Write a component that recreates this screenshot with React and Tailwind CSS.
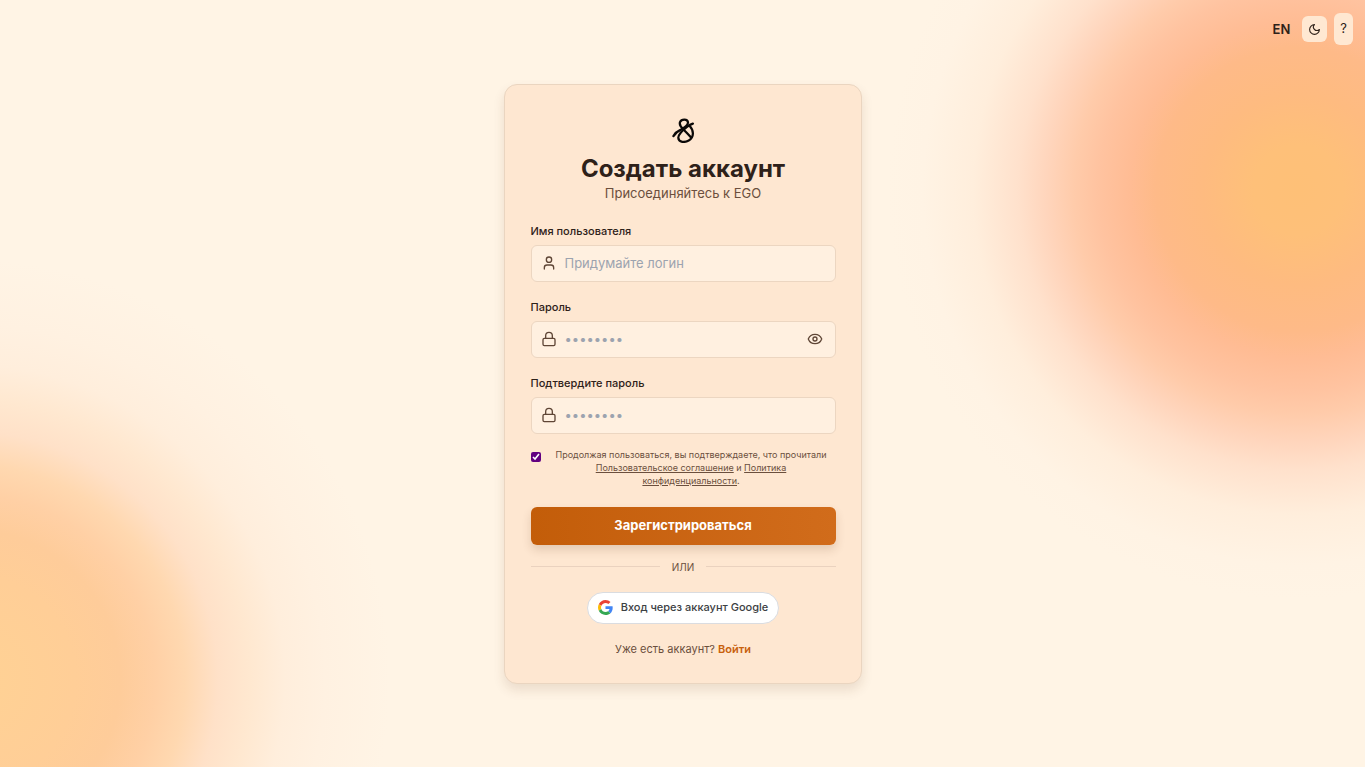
import { useState } from "react";
import { Eye, Lock, User } from "lucide-react";

function Logo() {
  return (
    <svg
      className="h-[25px] w-[23px]"
      viewBox="36 24 66 72"
      fill="none"
      stroke="#0b0908"
      strokeWidth="6.5"
      strokeLinecap="round"
      strokeLinejoin="round"
      aria-hidden="true"
    >
      <path d="M40 76C45 68 52 62 59 59C70 53 82 45 82 37C81 26 63 26 59 36C56 45 62 51 69 57C77 65 83 72 90 79" />
      <path d="M96 40C90 42 86 44 80 49C67 59 54 71 54 81C55 95 73 95 84 89C100 79 99 60 87 47" />
    </svg>
  );
}

function MoonIcon() {
  return (
    <svg
      className="size-[13px]"
      viewBox="0 0 24 24"
      fill="none"
      stroke="currentColor"
      strokeWidth="2"
      strokeLinecap="round"
      strokeLinejoin="round"
      aria-hidden="true"
    >
      <path d="M12 3a6 6 0 0 0 9 9 9 9 0 1 1-9-9Z" />
    </svg>
  );
}

function GoogleLogo() {
  return (
    <svg className="size-[15px]" viewBox="0 0 48 48" aria-hidden="true">
      <path fill="#EA4335" d="M24 9.5c3.54 0 6.71 1.22 9.21 3.6l6.85-6.85C35.9 2.38 30.47 0 24 0 14.62 0 6.51 5.38 2.56 13.22l7.98 6.19C12.43 13.72 17.74 9.5 24 9.5z" />
      <path fill="#4285F4" d="M46.98 24.55c0-1.57-.15-3.09-.38-4.55H24v9.02h12.94c-.58 2.96-2.26 5.48-4.78 7.18l7.73 6c4.51-4.18 7.09-10.36 7.09-17.65z" />
      <path fill="#FBBC05" d="M10.53 28.59c-.48-1.45-.76-2.99-.76-4.59s.27-3.14.76-4.59l-7.98-6.19C.92 16.46 0 20.12 0 24c0 3.88.92 7.54 2.56 10.78l7.97-6.19z" />
      <path fill="#34A853" d="M24 48c6.48 0 11.93-2.13 15.89-5.81l-7.73-6c-2.15 1.45-4.92 2.3-8.16 2.3-6.26 0-11.57-4.22-13.47-9.91l-7.98 6.19C6.51 42.62 14.62 48 24 48z" />
    </svg>
  );
}

function Field({ id, label, icon: Icon, type = "text", placeholder, children }) {
  return (
    <div className="flex flex-col gap-1.5">
      <label htmlFor={id} className="text-[11px] leading-4 font-medium">
        {label}
      </label>
      <div className="flex h-[37px] items-center gap-2 rounded-md border border-[#ecd6c1] bg-[#fff0e0] pr-3 pl-[9px]">
        <Icon className="size-4 shrink-0 text-[#5f4636]" strokeWidth={2} />
        <input
          id={id}
          type={type}
          placeholder={placeholder}
          className="h-full min-w-0 flex-1 bg-transparent text-[13px] outline-none placeholder:text-[#9ca3af]"
        />
        {children}
      </div>
    </div>
  );
}

export default function App() {
  const [visible, setVisible] = useState(false);

  return (
    <div className="relative flex min-h-screen flex-col items-center justify-center overflow-hidden bg-[#fff4e5] bg-[radial-gradient(circle_at_calc(100%-67px)_190px,#fec077_0px,#fec079_45px,#febb80_95px,#feba88_142px,#ffbc94_168px,#ffc3a0_200px,#ffcbaa_224px,#ffd5bc_252px,#ffe1cc_280px,#ffeedc_325px,#fff3e4_375px,#fff4e500_410px),radial-gradient(circle_at_-30px_calc(100%-87px),#ffd294_0px,#ffce97_105px,#fecc9a_150px,#ffd0a5_185px,#ffd8b0_215px,#ffe1c8_248px,#ffe8d0_280px,#ffeedc_315px,#fff1e1_355px,#fff4e500_420px)] font-['Inter',sans-serif] text-[#2e2119]">
      <nav className="absolute top-[13px] right-3 flex items-center gap-[7px]">
        <button type="button" className="px-[5px] text-[13px] leading-5 font-semibold">
          EN
        </button>
        <button type="button" aria-label="Тёмная тема" className="flex h-[26px] w-[25px] items-center justify-center rounded-md bg-[#ffe8d2]">
          <MoonIcon />
        </button>
        <button type="button" className="h-8 rounded-md bg-[#ffe8d2] px-1.5 text-[13px]">
          ?
        </button>
      </nav>

      <main className="w-full max-w-[358px] rounded-[13px] border border-[#ead5c0] bg-[#fee7d1] pt-[33px] pr-[25px] pb-[26px] pl-[26px] shadow-[0_6px_12px_rgba(90,50,20,0.12)]">
        <header className="flex flex-col items-center text-center">
          <Logo />
          <h1 className="mt-2.5 text-[24px] leading-8 font-bold">Создать аккаунт</h1>
          <p className="text-[13px] leading-4 text-[#6b4f3d]">Присоединяйтесь к EGO</p>
        </header>

        <form className="mt-[22px] flex flex-col" onSubmit={(e) => e.preventDefault()}>
          <div className="flex flex-col gap-[17px]">
            <Field id="login" label="Имя пользователя" icon={User} placeholder="Придумайте логин" />
            <Field id="password" label="Пароль" icon={Lock} type={visible ? "text" : "password"} placeholder="••••••••">
              <button type="button" aria-label="Показать пароль" onClick={() => setVisible(!visible)}>
                <Eye className="size-4 text-[#5f4636]" strokeWidth={2} />
              </button>
            </Field>
            <Field id="confirm" label="Подтвердите пароль" icon={Lock} type="password" placeholder="••••••••" />
          </div>

          <div className="mt-3.5 flex items-start gap-1.5 text-[#6b4f3d]">
            <input id="terms" type="checkbox" defaultChecked className="mt-1 size-[10px] shrink-0 accent-[#620080]" />
            <label htmlFor="terms" className="flex-1 text-center text-[9px] leading-[13px]">
              Продолжая пользоваться, вы подтверждаете, что прочитали{" "}
              <br />
              <a href="#terms" className="underline">Пользовательское соглашение</a> и{" "}
              <a href="#privacy" className="underline">Политика<br />конфиденциальности</a>.
            </label>
          </div>

          <button
            type="submit"
            className="mt-5 h-[38px] rounded-md bg-linear-to-r from-[#c35d09] to-[#d16c1b] text-[13px] font-bold text-white shadow-[0_5px_10px_rgba(90,50,20,0.16)]"
          >
            Зарегистрироваться
          </button>
        </form>

        <div className="mt-3.5 flex items-center gap-3 text-[10px] leading-4 text-[#6b4f3d]">
          <span className="h-px flex-1 bg-[#ead2bf]" />
          ИЛИ
          <span className="h-px flex-1 bg-[#ead2bf]" />
        </div>

        <div className="mt-[17px] flex justify-center">
          <button
            type="button"
            className="flex h-8 items-center gap-2 rounded-full border border-[#dadce0] bg-white px-2.5 text-[11px] font-medium text-[#3c4043]"
          >
            <GoogleLogo />
            Вход через аккаунт Google
          </button>
        </div>

        <p className="mt-[17px] text-center text-[11px] leading-4 text-[#6b4f3d]">
          Уже есть аккаунт?{" "}
          <a href="#login" className="font-semibold text-[#c8600c]">Войти</a>
        </p>
      </main>
    </div>
  );
}
